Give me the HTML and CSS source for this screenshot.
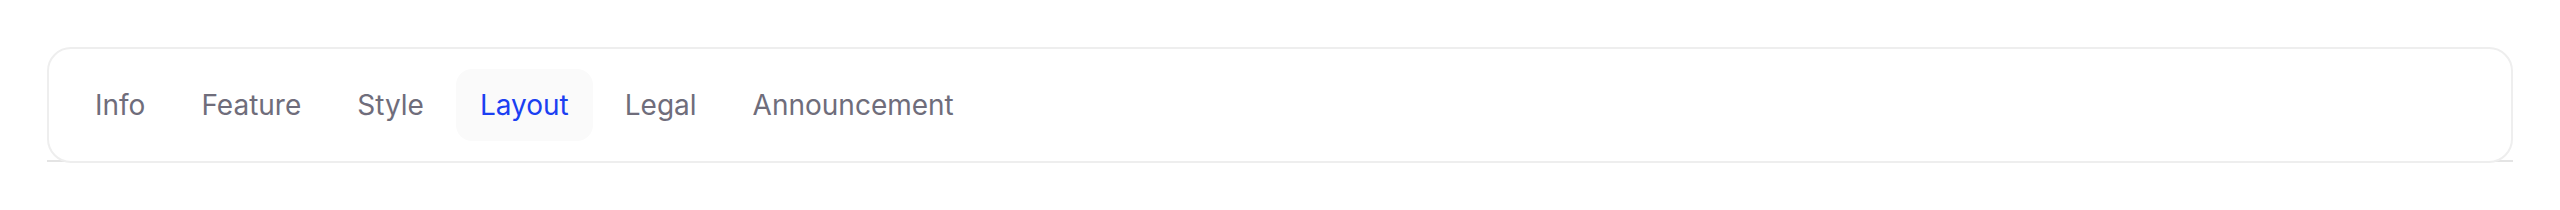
FILE: index.html
```html
<!DOCTYPE html>
<html lang="en">
<head>
    <meta charset="UTF-8">
    <meta name="viewport" content="width=device-width, initial-scale=1.0">
    <title>Tabs</title>
    <link rel="stylesheet" href="styles.css">
</head>
<body>
    <div class="page">
        <div class="tabs-wrap">
            <nav class="tabs">
                <button class="tab">Info</button>
                <button class="tab">Feature</button>
                <button class="tab">Style</button>
                <button class="tab tab-active">Layout</button>
                <button class="tab">Legal</button>
                <button class="tab">Announcement</button>
            </nav>
        </div>
    </div>
</body>
</html>
```

FILE: styles.css
```css
:root {
    --text-muted: #6f6d7b;
    --accent: #1b3ff2;
    --border: #eeeeee;
    --line: #e4e4e4;
    --active-bg: #fafafa;
}

* {
    margin: 0;
    padding: 0;
    box-sizing: border-box;
    font-family: Inter, "Noto Sans", sans-serif;
}

body {
    background: #ffffff;
    height: 210px;
}

.page {
    padding: 47px 47px 0 47px;
}

.tabs-wrap {
    border-bottom: 2px solid var(--line);
    height: 115px;
}

.tabs {
    display: flex;
    align-items: center;
    gap: 8px;
    height: 116px;
    padding: 19px 22px 20px;
    background: #ffffff;
    border: 2px solid var(--border);
    border-radius: 24px;
    position: relative;
}

.tab {
    border: none;
    background: transparent;
    color: var(--text-muted);
    font-size: 28px;
    font-weight: 400;
    line-height: 40px;
    padding: 16px 24px;
    border-radius: 16px;
    cursor: pointer;
}

.tab-active {
    background: var(--active-bg);
    color: var(--accent);
}
```
